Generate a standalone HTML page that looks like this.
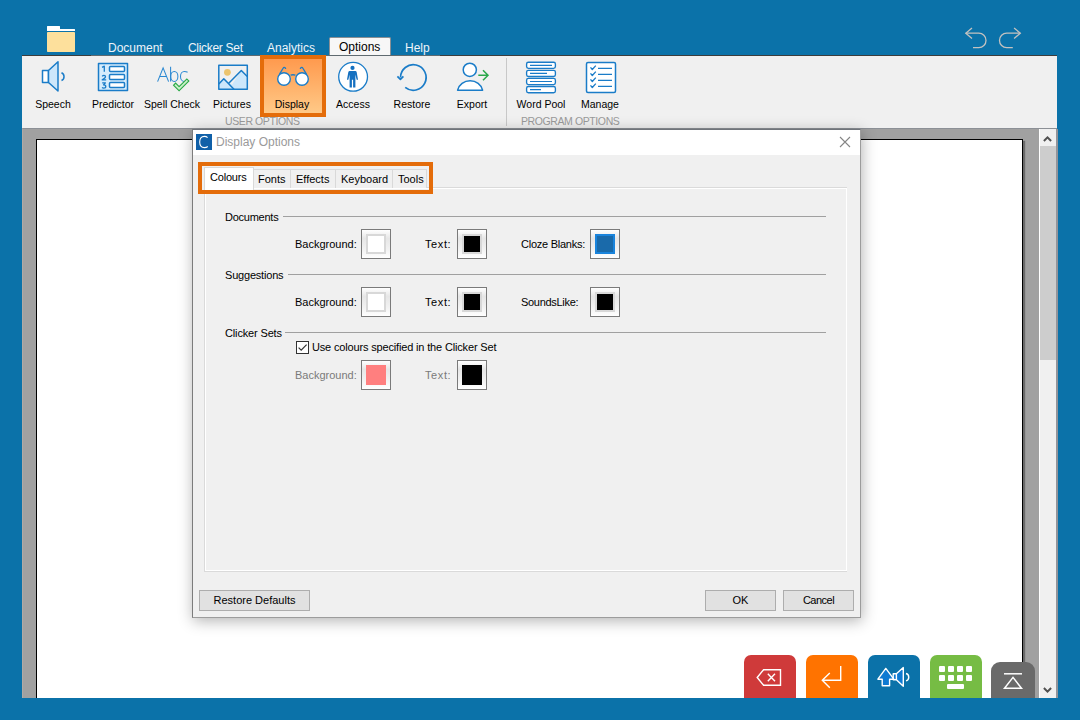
<!DOCTYPE html>
<html><head><meta charset="utf-8">
<style>
*{margin:0;padding:0;box-sizing:border-box}
html,body{width:1080px;height:720px;overflow:hidden}
body{background:#0b72a9;font-family:"Liberation Sans",sans-serif;position:relative;color:#000}
.a{position:absolute}
.tab{position:absolute;top:41px;font-size:12px;color:#eef4fa;white-space:nowrap}
#ribbon{position:absolute;left:22px;top:55px;width:1035px;height:73px;background:#f0f0f0;border-top:1px solid #3c3c3c}
.rl{position:absolute;top:98px;font-size:10.5px;white-space:nowrap;text-align:center;width:60px}
.grp{position:absolute;top:115px;font-size:10.5px;letter-spacing:-0.4px;color:#9a9a9a;white-space:nowrap}
#doc{position:absolute;left:22px;top:128px;width:1035px;height:570px;background:#a1a1a1;border-top:1px solid #8c9096;border-left:1px solid #b0aaa6}
#paper{position:absolute;left:36px;top:139px;width:987px;height:600px;background:#fff;border:1px solid #000;box-shadow:2px 2px 1px #6a6a6a}
#sb{position:absolute;left:1039px;top:129px;width:19px;height:569px;background:#f0f0f0;border-left:1px solid #fff;border-right:2px solid #92949a}
#dlg{position:absolute;left:192px;top:129px;width:669px;height:489px;background:#f0f0f0;border:1px solid #9c9c9c;border-top-color:#70747a;border-left-color:#7c7c7c;box-shadow:1px 3px 14px rgba(0,0,0,.3)}
#title{position:absolute;left:0;top:0;width:667px;height:26px;background:#fff}
.dt{position:absolute;font-size:11px;line-height:13px;white-space:nowrap}
.sw{position:absolute;width:30px;height:30px;border:1px solid #7a7a7a;background:linear-gradient(#fff,#e6e6e6 30%,#f2f2f2 70%,#fff)}
.sw i{position:absolute;left:4px;top:4px;width:20px;height:20px;border:2px solid #d8d8d8}
.line{position:absolute;height:1px;background:#a0a0a0}
.btn{position:absolute;height:21px;background:#e1e1e1;border:1px solid #adadad;font-size:11px;text-align:center;line-height:19px}
.kb{position:absolute;top:655px;width:52px;height:43px;border-radius:7px 7px 0 0}
</style></head><body>

<!-- folder -->
<svg class="a" style="left:46px;top:25px" width="30" height="28" viewBox="0 0 30 28">
<path d="M1 1.5 Q1 1 1.5 1 H13.5 Q14 1 14 1.5 V4 H28.5 Q29 4 29 4.5 V6 H1Z" fill="#fff"/>
<rect x="1" y="7" width="28" height="20" rx="0.8" fill="#fde09c"/>
</svg>

<!-- tabs -->
<div class="tab" style="left:108px">Document</div>
<div class="tab" style="left:188px;letter-spacing:-0.3px">Clicker Set</div>
<div class="tab" style="left:267px">Analytics</div>
<div class="a" style="left:329px;top:37px;width:62px;height:19px;background:#f7f7f7;border:1px solid #8a8f94;border-bottom:none;border-radius:2px 2px 0 0"></div>
<div class="tab" style="left:339px;top:40px;color:#000">Options</div>
<div class="tab" style="left:405px">Help</div>

<!-- undo redo -->
<svg class="a" style="left:960px;top:22px" width="70" height="32" viewBox="0 0 70 32">
<g fill="none" stroke="#c4c2c0" stroke-width="1.3">
<path d="M5.8 11.2 H18.8 A7.2 7.2 0 0 1 18.8 25.6 H13"/>
<path d="M12 5.9 L5.8 11.2 L12 16.5"/>
<path d="M60.3 11.2 H46.7 A7.2 7.2 0 0 0 46.7 25.6 H52.8"/>
<path d="M54.1 5.9 L60.3 11.2 L54.1 16.5"/>
</g></svg>

<div id="ribbon"></div>
<div class="a" style="left:91px;top:55px;width:349px;height:1px;background:#5f6a70"></div>
<!-- display highlighted button -->
<div class="a" style="left:260px;top:55px;width:66px;height:62px;border:4px solid #e46c0a;background:linear-gradient(#ff9a4e,#ffc987)"></div>
<div class="a" style="left:506px;top:58px;width:1px;height:68px;background:#c8c8c8"></div>
<svg class="a" style="left:0;top:0" width="1080" height="130" viewBox="0 0 1080 130">
<g stroke="#1a7cc8" stroke-width="1.5" stroke-linejoin="round" fill="none">
 <!-- speech -->
 <rect x="42.5" y="70.5" width="6" height="12" fill="#fff"/>
 <path d="M48.5 70.5 L58 61.8 V91 L48.5 82.5Z" fill="#cde7fb"/>
 <path d="M61.5 72.8 A4.2 4.2 0 0 1 61.5 80.5"/>
 <!-- predictor -->
 <rect x="98.5" y="63.5" width="29" height="27" fill="#d6ecfc"/>
 <rect x="109.5" y="66.5" width="15" height="5" rx="1" fill="#fff"/>
 <rect x="109.5" y="74.5" width="15" height="5" rx="1" fill="#fff"/>
 <rect x="109.5" y="82.5" width="15" height="5" rx="1" fill="#fff"/>
 <!-- pictures -->
 <path d="M218.8 82 L223.8 78.5 L232 84.7 L241.3 70.5 L247.3 76.3 V89.3 H218.8Z" fill="#cde7fb" stroke="none"/>
 <rect x="218.8" y="65.3" width="28.5" height="24" />
 <path d="M218.8 84 L223.8 78.8 L234 89.3 M228.5 83.5 L241.3 70.5 L247.3 76.5"/>
 <!-- display glasses -->
 <path d="M290.6 75.2 Q293 74.4 295.4 75.2" stroke-width="1.4"/>
 <path d="M279.8 73.6 L283.6 67.5 Q284.6 67 285.6 68.4 M306.2 73.6 L302.4 67.5 Q301.4 67 300.4 68.4" stroke-width="1.3" stroke-linecap="round"/>
 <circle cx="284" cy="79" r="6.3" fill="#fff" stroke-width="1.4"/>
 <circle cx="302" cy="79" r="6.3" fill="#fff" stroke-width="1.4"/>
 <!-- access -->
 <circle cx="353.1" cy="76.8" r="14.4" fill="#fff" stroke-width="1.3"/>
 <!-- restore -->
 <path d="M405.2 87.4 A12.8 12.8 0 1 0 400.5 77.5" stroke-width="1.7"/>
 <path d="M397.4 76.4 L400.4 79.4 L403.4 76.4" stroke-width="1.7"/>
 <!-- export -->
 <circle cx="469.8" cy="69.8" r="6.6" fill="#fff"/>
 <path d="M457.6 90.2 A12.8 12 0 0 1 482.6 90.2 Z" fill="#fff"/>
 <!-- word pool -->
 <rect x="526.6" y="62.2" width="28.8" height="6.2" rx="1.8" fill="#fff" stroke-width="1.35"/>
 <rect x="526.6" y="70.3" width="28.8" height="6.2" rx="1.8" fill="#fff" stroke-width="1.35"/>
 <rect x="526.6" y="78.4" width="28.8" height="6.2" rx="1.8" fill="#fff" stroke-width="1.35"/>
 <rect x="526.6" y="86.5" width="28.8" height="6.2" rx="1.8" fill="#fff" stroke-width="1.35"/>
 <path d="M530 65.3 H552 M530 73.4 H547 M530 81.5 H552 M530 89.6 H541" stroke-width="1.2"/>
 <!-- manage -->
 <rect x="586.5" y="62.5" width="29" height="30" rx="1.5" fill="#fff"/>
 <path d="M598 68.3 H612 M598 74.4 H612 M598 80.3 H612 M598 86.3 H612" stroke-width="1.2"/>
 <path d="M590.5 67.3 L592.3 69.5 L595.8 65.6 M590.5 73.3 L592.3 75.5 L595.8 71.6 M590.5 79.3 L592.3 81.5 L595.8 77.6 M590.5 85.3 L592.3 87.5 L595.8 83.6" stroke-width="1.3"/>
</g>
<!-- predictor numbers -->
<g fill="none" stroke="#1a7cc8" stroke-width="1.3" stroke-linejoin="round">
 <path d="M102 67.3 L104.3 66.2 V71.8"/>
 <path d="M102.2 76.4 Q102.9 75.3 104 75.3 Q105.5 75.3 105.5 76.7 Q105.5 77.8 102.2 79.8 H106.2"/>
 <path d="M102.2 82.9 H105.4 L103.5 84.9 Q105.8 84.9 105.8 86.5 Q105.8 88.1 103.8 88.1 Q102.7 88.1 102 87.5"/>
</g>
<!-- access person -->
<g fill="#1470c0">
 <circle cx="352.5" cy="67.9" r="2.1"/>
 <path d="M349.6 71.1 H355.4 Q356.4 71.1 356.7 72.2 L357.9 79 Q358 79.9 357.2 79.9 Q356.7 79.9 356.5 79.2 L355.4 74.6 V87.6 H353.1 V79.8 H351.9 V87.6 H349.6 V74.6 L348.5 79.2 Q348.3 79.9 347.8 79.9 Q347 79.9 347.1 79 L348.3 72.2 Q348.6 71.1 349.6 71.1Z"/>
</g>
<!-- spell check -->
<g fill="none" stroke="#2a88d2" stroke-width="1.05">
 <path d="M157.6 81.6 L163.1 67.9 L168.6 81.6 M159.8 76.4 H166.4"/>
 <path d="M170.6 66.8 V81.6"/>
 <ellipse cx="174.3" cy="76.4" rx="3.6" ry="5"/>
 <path d="M187.6 72.2 Q186.2 71.4 184.3 71.4 A3.8 5 0 0 0 184.3 81.4 Q186 81.4 187 80.6"/>
</g>
<path d="M175.6 85.2 L179.1 88.7 L186.8 81.1" fill="none" stroke="#27a844" stroke-width="4" stroke-linejoin="miter" stroke-linecap="square"/>
<path d="M175.6 85.2 L179.1 88.7 L186.8 81.1" fill="none" stroke="#c8f0c8" stroke-width="1.8" stroke-linejoin="miter" stroke-linecap="square"/>
<circle cx="227.4" cy="72.3" r="3.4" fill="#ecc46e"/>
<!-- export arrow -->
<path d="M478.3 75.3 H488 M483 70.3 L488 75.3 L483 80.3" fill="none" stroke="#2aa84a" stroke-width="1.5"/>
</svg>
<div class="rl" style="left:23px">Speech</div>
<div class="rl" style="left:83px">Predictor</div>
<div class="rl" style="left:142px">Spell Check</div>
<div class="rl" style="left:202px">Pictures</div>
<div class="rl" style="left:262px">Display</div>
<div class="rl" style="left:323px">Access</div>
<div class="rl" style="left:382px">Restore</div>
<div class="rl" style="left:442px">Export</div>
<div class="rl" style="left:511px">Word Pool</div>
<div class="rl" style="left:570px">Manage</div>
<div class="grp" style="left:225px">USER OPTIONS</div>
<div class="grp" style="left:521px">PROGRAM OPTIONS</div>

<div id="doc"></div>
<div id="paper"></div>
<div id="sb"></div>

<!-- dialog -->
<div id="dlg"></div>
<div class="a" style="left:193px;top:130px;width:667px;height:25px;background:#fff"></div>
<div class="a" style="left:196px;top:134px;width:16px;height:16px;background:#1060a8;overflow:hidden">
 <svg width="16" height="16" viewBox="0 0 16 16"><path d="M11.6 3.6 Q10.4 2.4 8.4 2.4 Q3.7 2.4 3.7 8 Q3.7 13.6 8.4 13.6 Q10.4 13.6 11.8 12.5" fill="none" stroke="#fff" stroke-width="1.1"/></svg>
</div>
<div class="a" style="left:216px;top:134px;font-size:12px;line-height:16px;color:#9a9a9a;white-space:nowrap">Display Options</div>
<svg class="a" style="left:838px;top:135px" width="14" height="14" viewBox="0 0 14 14"><path d="M2 2 L12 12 M12 2 L2 12" stroke="#858585" stroke-width="1.1" fill="none"/></svg>

<!-- tab panel -->
<div class="a" style="left:204px;top:187px;width:643px;height:385px;border:1px solid #dadada;background:#f0f0f0"><div style="position:absolute;left:0;top:0;right:0;bottom:0;border:1px solid #fff;border-right:none;border-bottom:none"></div></div>
<div class="a" style="left:846px;top:188px;width:1px;height:383px;background:#fff"></div>
<div class="a" style="left:205px;top:570px;width:641px;height:1px;background:#fff"></div>
<!-- tabs -->
<div class="a" style="left:253px;top:169px;width:38px;height:19px;background:#f0f0f0;border:1px solid #d9d9d9;border-bottom:none"></div>
<div class="a" style="left:290px;top:169px;width:46px;height:19px;background:#f0f0f0;border:1px solid #d9d9d9;border-bottom:none"></div>
<div class="a" style="left:335px;top:169px;width:58px;height:19px;background:#f0f0f0;border:1px solid #d9d9d9;border-bottom:none"></div>
<div class="a" style="left:392px;top:169px;width:35px;height:19px;background:#f0f0f0;border:1px solid #d9d9d9;border-bottom:none"></div>
<div class="a" style="left:204px;top:167px;width:50px;height:23px;background:#fff;border:1px solid #d9d9d9;border-bottom:none"></div>
<div class="dt" style="left:210px;top:171px;letter-spacing:-0.2px">Colours</div>
<div class="dt" style="left:258px;top:173px">Fonts</div>
<div class="dt" style="left:296px;top:173px">Effects</div>
<div class="dt" style="left:341px;top:173px">Keyboard</div>
<div class="dt" style="left:398px;top:173px">Tools</div>
<div class="a" style="left:198px;top:162px;width:235px;height:32px;border:4px solid #e46c0a"></div>

<!-- sections -->
<div class="dt" style="left:225px;top:211px;letter-spacing:-0.25px">Documents</div>
<div class="line" style="left:283px;top:216px;width:543px"></div>
<div class="dt" style="left:225px;top:269px;letter-spacing:-0.2px">Suggestions</div>
<div class="line" style="left:288px;top:274px;width:538px"></div>
<div class="dt" style="left:225px;top:327px;letter-spacing:-0.15px">Clicker Sets</div>
<div class="line" style="left:285px;top:332px;width:541px"></div>

<div class="dt" style="left:295px;top:238px">Background:</div>
<div class="sw" style="left:361px;top:229px"><i style="background:#fff"></i></div>
<div class="dt" style="left:425px;top:238px;letter-spacing:0.6px">Text:</div>
<div class="sw" style="left:457px;top:229px"><i style="background:#000"></i></div>
<div class="dt" style="left:521px;top:238px;letter-spacing:-0.25px">Cloze Blanks:</div>
<div class="sw" style="left:590px;top:229px"><i style="background:#1a6aaa;border-color:#1a84dc"></i></div>

<div class="dt" style="left:295px;top:296px">Background:</div>
<div class="sw" style="left:361px;top:287px"><i style="background:#fff"></i></div>
<div class="dt" style="left:425px;top:296px;letter-spacing:0.6px">Text:</div>
<div class="sw" style="left:457px;top:287px"><i style="background:#000"></i></div>
<div class="dt" style="left:521px;top:296px;letter-spacing:-0.3px">SoundsLike:</div>
<div class="sw" style="left:590px;top:287px"><i style="background:#000"></i></div>

<div class="a" style="left:296px;top:341px;width:13px;height:13px;border:1px solid #333;background:#fff"></div>
<svg class="a" style="left:296px;top:341px" width="13" height="13" viewBox="0 0 13 13"><path d="M2.6 6.6 L5.2 9.2 L10.6 3.6" fill="none" stroke="#333" stroke-width="1.2"/></svg>
<div class="dt" style="left:312px;top:341px;letter-spacing:-0.16px">Use colours specified in the Clicker Set</div>

<div class="dt" style="left:295px;top:369px;color:#7a7a7a">Background:</div>
<div class="sw" style="left:361px;top:360px"><i style="background:#ff7f7f;border:none;left:4px;top:4px;width:20px;height:20px"></i></div>
<div class="dt" style="left:425px;top:369px;color:#7a7a7a;letter-spacing:0.6px">Text:</div>
<div class="sw" style="left:457px;top:360px"><i style="background:#000;border:none;left:4px;top:4px;width:20px;height:20px"></i></div>

<!-- buttons -->
<div class="btn" style="left:199px;top:590px;width:111px">Restore Defaults</div>
<div class="btn" style="left:705px;top:590px;width:71px">OK</div>
<div class="btn" style="left:783px;top:590px;width:71px;letter-spacing:-0.5px">Cancel</div>

<!-- scrollbar parts -->
<div class="a" style="left:1040px;top:146px;width:16px;height:214px;background:#cdcdcd"></div>
<svg class="a" style="left:1040px;top:129px" width="16" height="569" viewBox="0 0 16 569">
<path d="M3.9 12 L7.5 8.4 L11.1 12 M3.9 559 L7.5 562.6 L11.1 559" fill="none" stroke="#505050" stroke-width="2"/>
</svg>
<!-- keyboard buttons -->
<div class="kb" style="left:744px;background:#cf3a3a"></div>
<div class="kb" style="left:806px;background:#ff7300"></div>
<div class="kb" style="left:868px;background:#0b72a9"></div>
<div class="kb" style="left:930px;background:#76bc44"></div>
<div class="kb" style="left:991px;top:662px;width:44px;height:36px;background:#6a6a6a;border-radius:9px 9px 0 0"></div>
<svg class="a" style="left:740px;top:650px" width="300" height="48" viewBox="740 650 300 48">
<g fill="none" stroke="#fff" stroke-width="1.4" stroke-linejoin="miter">
 <path d="M757.2 677.5 L763.6 669.7 H780.5 V685.3 H763.6Z"/>
 <path d="M767.8 673.8 L775 681.2 M775 673.8 L767.8 681.2"/>
 <path d="M840.7 666 V680.3 H822 M829.8 673 L822.3 680.3 L829.8 687.8"/>
 <path d="M893.2 673.8 H896.4 V679.8 H893.2Z M896.4 673.8 L903.3 667.6 V686.3 L896.4 679.8Z" fill="#0e7ad2" stroke-linejoin="round"/>
 <path d="M885.8 668.4 L877.9 679.2 H882.2 V685.8 H889.6 V679.2 H893.8Z" fill="#0e7ad2" stroke-linejoin="round"/>
 <path d="M906 673.5 A3.8 3.8 0 0 1 906 680.8"/>
 <path d="M1004 673.8 H1022" stroke-width="1.5"/>
 <path d="M1013 677.4 L1004.5 688.3 H1021.5Z" stroke-width="1.5"/>
</g>
<g fill="#fff">
 <rect x="939" y="666" width="6" height="6" rx="1"/><rect x="948" y="666" width="6" height="6" rx="1"/><rect x="957" y="666" width="6" height="6" rx="1"/><rect x="966" y="666" width="6" height="6" rx="1"/>
 <rect x="939" y="675" width="6" height="6" rx="1"/><rect x="948" y="675" width="6" height="6" rx="1"/><rect x="957" y="675" width="6" height="6" rx="1"/><rect x="966" y="675" width="6" height="6" rx="1"/>
 <rect x="947" y="684" width="17" height="5" rx="1"/>
</g>
</svg>
<div class="a" style="left:0;top:698px;width:1080px;height:22px;background:#0b72a9"></div>
</body></html>
